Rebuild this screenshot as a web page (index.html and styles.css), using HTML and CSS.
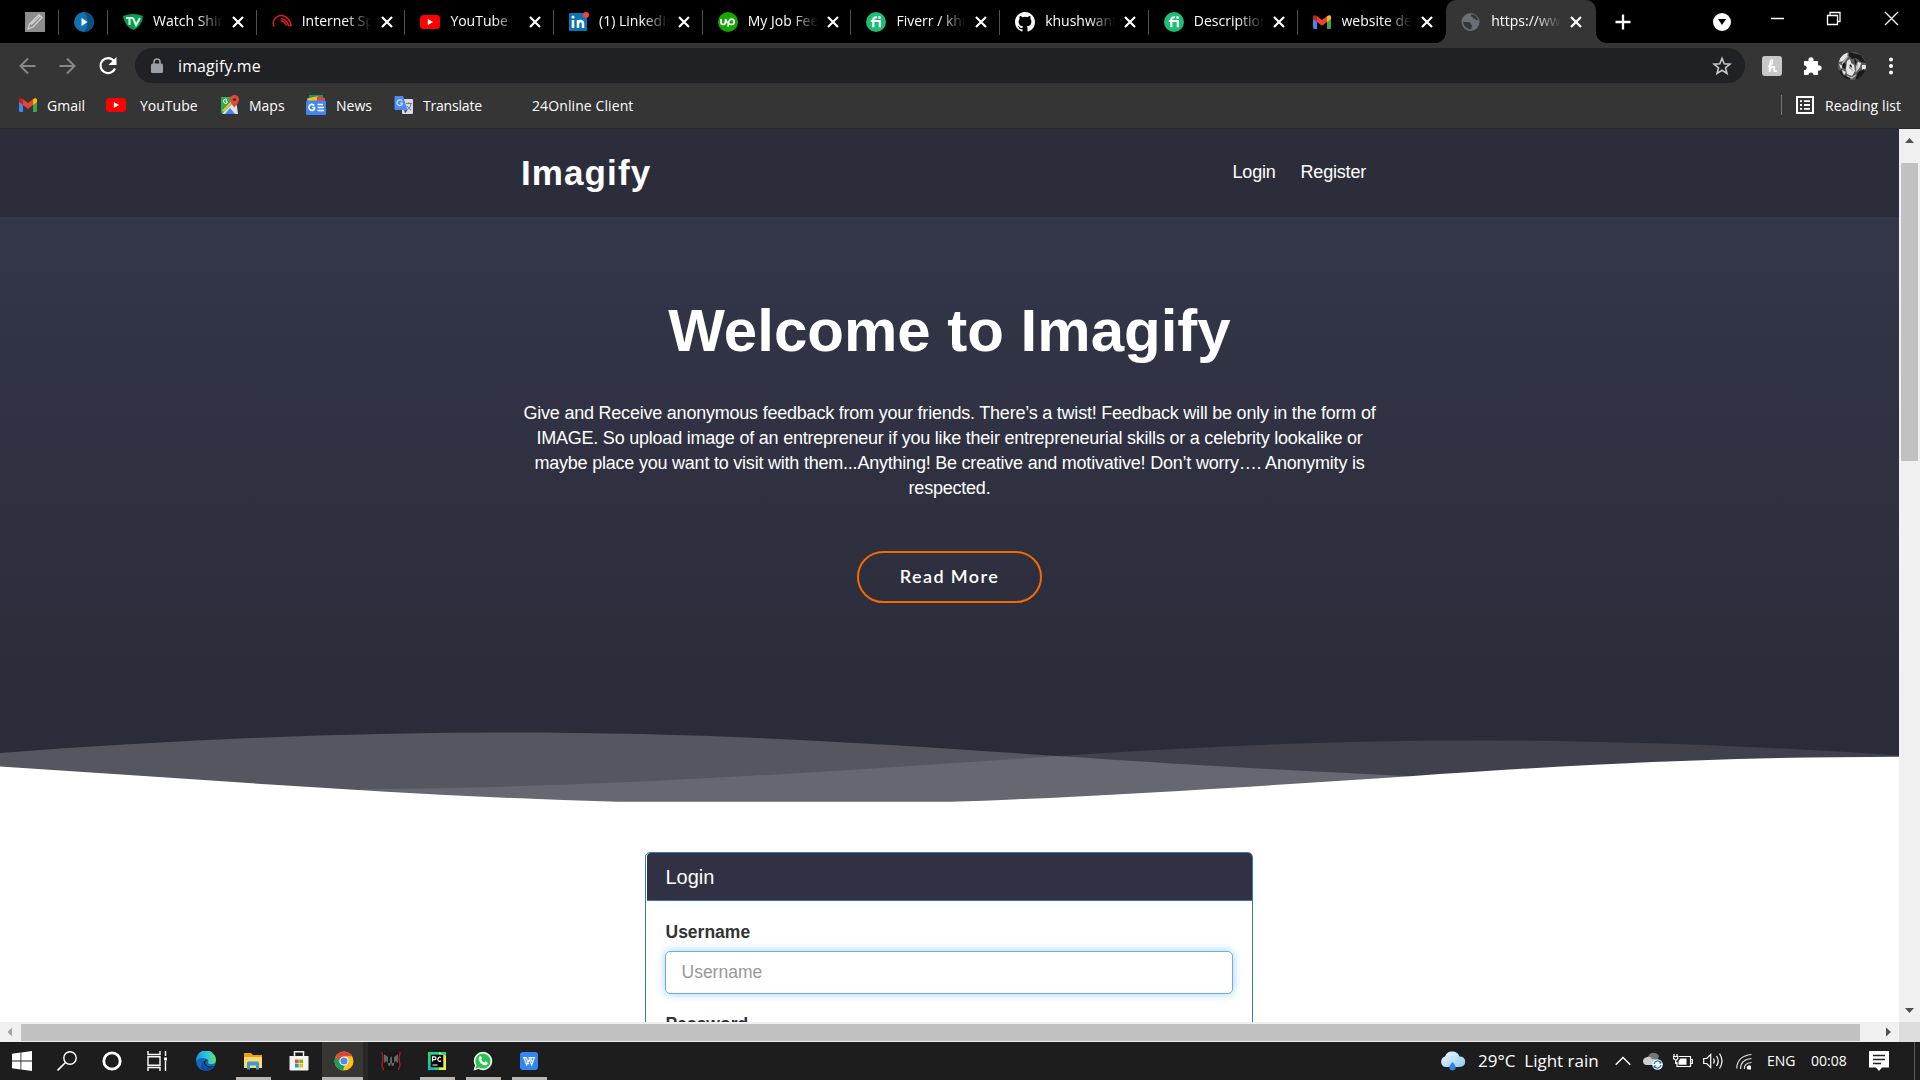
FILE: index.html
```html
<!DOCTYPE html>
<html lang="en">
<head>
<meta charset="utf-8">
<title>Imagify</title>
<link rel="stylesheet" href="styles.css">
</head>
<body>
<svg class="defs" aria-hidden="true">
  <symbol id="x" viewBox="0 0 12 12"><path d="M1 1l10 10M11 1L1 11" stroke="#fff" stroke-width="2.200" fill="none"/></symbol>
  <symbol id="yt" viewBox="0 0 20 14"><rect width="20" height="14" rx="3.5" fill="#f00"/><path d="M7.8 4v6l5.3-3z" fill="#fff"/></symbol>
  <symbol id="gm" viewBox="0 0 18 14"><path d="M0 2v10.500q0 1.500 1.500 1.500H4V5z" fill="#4285f4"/><path d="M18 2v10.500q0 1.500-1.500 1.500H14V5z" fill="#34a853"/><path d="M4 1.200L9 5l5-3.800V7l-5 3.800L4 7z" fill="#ea4335"/><path d="M0 2C0 0 2-.5 4 1.200V7L0 4z" fill="#c5221f"/><path d="M18 2c0-2-2-2.500-4-.8V7l4-3z" fill="#fbbc04"/></symbol>
  <symbol id="fi" viewBox="0 0 20 20"><circle cx="10" cy="10" r="10" fill="#1dbf73"/><path d="M4.800 9h9v6.200M7.300 15.200V8q0-3 3.700-2.700" fill="none" stroke="#fff" stroke-width="2.200"/><circle cx="13.600" cy="5.700" r="1.400" fill="#fff"/></symbol>
</svg>

<header class="tabs">
  <div class="tab pinned first"><svg width="20" height="20" viewBox="0 0 20 20"><rect width="20" height="20" fill="#8d8d8d"/><path d="M3 17l1.500-5L14 2.500l3 3L8 15zM6 12.500L15 4" fill="none" stroke="#d4d4d4" stroke-width="1.200"/></svg></div>
  <div class="tab pinned"><svg width="20" height="20" viewBox="0 0 20 20"><circle cx="10" cy="10" r="10" fill="#1272b4"/><path d="M10 0a10 10 0 0 1 0 20A16 16 0 0 0 10 0" fill="#095284"/><path d="M7.500 6v8l6-4z" fill="#fff"/></svg></div>
  <div class="tab"><svg width="20" height="20" viewBox="0 0 20 20"><path d="M0 4Q10 0 20 4 19 14 10.500 18 2 15 0 4z" fill="#0a9d4e"/><path d="M3 6h7M6.500 6v7M10 6l3 7 4-7" fill="none" stroke="#d8ffe6" stroke-width="2"/></svg><span class="title">Watch Shinchan</span><svg class="x"><use href="#x"/></svg></div>
  <div class="tab"><svg width="20" height="20" viewBox="0 0 20 20"><g fill="none" stroke="#e11b22" stroke-width="1.500"><path d="M2.200 14.500Q0 11 2.500 7.300 6 3 11 3.700 17.500 5 19.200 13.500H16"/><path d="M8.500 6.500Q14 7 16.500 13.500M8.500 8.800q4 .5 6 4.700"/></g></svg><span class="title">Internet Speed</span><svg class="x"><use href="#x"/></svg></div>
  <div class="tab"><svg width="20" height="14"><use href="#yt"/></svg><span class="title">YouTube</span><svg class="x"><use href="#x"/></svg></div>
  <div class="tab"><svg width="20" height="20" viewBox="0 0 20 20"><rect y="1" width="18" height="18" rx="1" fill="#0a77b5"/><path d="M4 8v8M9 16V8M9 12q0-3 2.500-3t2.500 3v4" stroke="#fff" stroke-width="2.500" fill="none"/><circle cx="4" cy="5" r="1.500" fill="#fff"/><circle cx="17" cy="3" r="3" fill="#f0433a"/></svg><span class="title">(1) LinkedIn</span><svg class="x"><use href="#x"/></svg></div>
  <div class="tab"><svg width="20" height="20" viewBox="0 0 20 20"><circle cx="10" cy="10" r="10" fill="#14a800"/><path d="M3 7v3q0 2.500 2.200 2.500T7.500 10V7q2 5.500 6 5.500a2.700 2.700 0 1 0 0-5.400q-3 0-3.500 7.500" fill="none" stroke="#fff" stroke-width="1.700"/></svg><span class="title">My Job Feed</span><svg class="x"><use href="#x"/></svg></div>
  <div class="tab"><svg width="20" height="20"><use href="#fi"/></svg><span class="title">Fiverr / khush</span><svg class="x"><use href="#x"/></svg></div>
  <div class="tab"><svg width="20" height="20" viewBox="0 0 16 16"><path fill="#fff" d="M8 0C3.580 0 0 3.580 0 8c0 3.540 2.290 6.530 5.470 7.590.4.070.55-.17.55-.38 0-.19-.01-.82-.01-1.490-2.010.37-2.530-.49-2.690-.94-.09-.23-.48-.94-.82-1.130-.28-.15-.68-.52-.01-.53.63-.01 1.080.58 1.230.82.72 1.210 1.870.87 2.330.66.07-.52.28-.87.51-1.070-1.780-.2-3.640-.89-3.640-3.950 0-.87.31-1.590.82-2.150-.08-.2-.36-1.020.08-2.120 0 0 .67-.21 2.200.82a7.600 7.600 0 0 1 4 0c1.530-1.040 2.200-.82 2.200-.82.44 1.100.16 1.920.08 2.120.51.56.82 1.270.82 2.150 0 3.070-1.870 3.750-3.650 3.950.29.25.54.73.54 1.480 0 1.070-.01 1.930-.01 2.200 0 .21.15.46.55.38A8 8 0 0 0 16 8c0-4.420-3.580-8-8-8z"/></svg><span class="title">khushwant</span><svg class="x"><use href="#x"/></svg></div>
  <div class="tab"><svg width="20" height="20"><use href="#fi"/></svg><span class="title">Description</span><svg class="x"><use href="#x"/></svg></div>
  <div class="tab last"><svg class="gm" width="18" height="14"><use href="#gm"/></svg><span class="title">website dev</span><svg class="x"><use href="#x"/></svg></div>
  <div class="tab active"><svg width="20" height="20" viewBox="0 0 20 20"><circle cx="9.500" cy="10" r="9" fill="#6b6f75"/><path d="M10 2.500Q16 2 17 8q-3 1-3.500-1.500-2 .5-2-1.500-2 0-1.500-2.500zM2 10h5q3 0 2.500 2.500 3 0 1 2.500v2.500Q3 17 2 10z" fill="#353535"/></svg><span class="title">https://www</span><svg class="x"><use href="#x"/></svg></div>
  <svg class="plus" width="16" height="16" viewBox="0 0 16 16"><path d="M8 .5v15M.5 8h15" stroke="#fff" stroke-width="2.300"/></svg>
  <svg class="wc" width="204" height="36" viewBox="0 0 204 36"><circle cx="9" cy="22" r="9" fill="#fff"/><path d="M5 19h8l-4 6z" fill="#000"/><g fill="none" stroke="#fff" stroke-width="1.300"><path d="M58 18.500h13M114.500 15.500h10v9h-10zM117 15.500v-3h10v9h-2.500M172 12l13 13M185 12l-13 13"/></g></svg>
</header>

<nav class="toolbar">
  <div class="row">
    <svg class="arrows" width="100" height="24" viewBox="0 0 100 24"><g fill="none" stroke="#85878a" stroke-width="2"><path d="M17.500 12H2.500M10 4.500L2.500 12l7.500 7.500M41.500 12h15M49 4.500l7.500 7.500-7.500 7.500"/></g><path d="M96 7A7.500 7.500 0 1 0 97 14.500" fill="none" stroke="#fff" stroke-width="2.200"/><path d="M98.500 3v8h-8z" fill="#fff"/></svg>
    <div class="address">
      <svg width="12" height="15" viewBox="0 0 12 15"><path d="M3 7V4a3 3 0 0 1 6 0v3" fill="none" stroke="#9aa0a6" stroke-width="1.600"/><rect y="5.500" width="12" height="9.500" rx="1.500" fill="#9aa0a6"/></svg>
      <span class="url">imagify.me</span>
      <svg class="star" width="20" height="20" viewBox="0 0 20 20"><path d="M10 2.300l2.200 5.400 5.800.4-4.500 3.700 1.500 5.700-5-3.200-5 3.200 1.500-5.700L2 8.100l5.800-.4z" fill="none" stroke="#c4c7cb" stroke-width="1.600"/></svg>
    </div>
    <svg class="ext" width="22" height="22" viewBox="0 0 22 22"><rect x="1" y="1" width="20" height="20" rx="3" fill="#c8c8c8"/><path d="M7 12q5-3 4.500-6.500Q9.500 4 9 9l-.5 8q1-5 3.500-5.500 2 0 1 3-.5 3 3 1" fill="none" stroke="#fff" stroke-width="1.600"/></svg>
    <svg class="puzzle" width="20" height="20" viewBox="0 0 20 20"><path d="M2 5h4.500a2.700 2.700 0 1 1 5 0H16v4.500a2.700 2.700 0 1 1 0 5V19h-4.500a2.300 2.300 0 1 0-5 0H2v-5a2.300 2.300 0 1 0 0-4.500z" fill="#fff"/></svg>
    <svg class="avatar" width="28" height="28" viewBox="0 0 28 28"><clipPath id="face"><circle cx="14" cy="14" r="14"/></clipPath><g clip-path="url(#face)"><path fill="#5c5c5c" d="M0 0h28v28H0z"/><path fill="#e6e6e6" d="M3 3l7-3-1 5-4 4-4 1zM9 9l3-2 1 4 3 2 1 6-3 5-5-2-1-5zM20 10l3 1-1 4-3 4-1-4zM24 13h4v4l-4 1zM1 12l4 2-2 3zM4 18l4 2-2 3z"/><path fill="#1b1b1b" d="M11 0l12 3 5 8-5-1-5-4-4 1-3-3zM5 10l3 2-1 5-3-2zM0 19l3-1 2 5 7 2v4H4zM12 12l2 2-1 3-2-1zM20 20l6-3 2 3-6 8h-5zM16 5l3 5-2 3z"/><path d="M4 12l6-8M11 14l4 5M20 12l-2 8M9 24l5 2 4-3" stroke="#b4b4b4" stroke-width="1.300" fill="none"/></g></svg>
    <svg class="dots" width="6" height="22" viewBox="0 0 6 22"><g fill="#fff"><circle cx="3" cy="4.500" r="2"/><circle cx="3" cy="11" r="2"/><circle cx="3" cy="17.500" r="2"/></g></svg>
  </div>
  <div class="bookmarks">
    <a class="b-gmail"><svg width="18" height="14"><use href="#gm"/></svg>Gmail</a>
    <a class="b-yt"><svg width="20" height="14"><use href="#yt"/></svg>YouTube</a>
    <a class="b-maps"><svg width="18" height="20" viewBox="0 0 18 20"><path d="M0 2h16v16H0z" fill="#34a853"/><path d="M1 19L15 5l2 14z" fill="#dfe3e8"/><path d="M4 19l5-6 5 6z" fill="#4285f4"/><path d="M2 16L13 5" stroke="#fbc116" stroke-width="2"/><path d="M9 4.500a4.500 4.500 0 0 1 9 0q0 3-4.500 8Q9 8 9 4.500z" fill="#dd4b3e"/><circle cx="13.500" cy="4.500" r="1.600" fill="#801b13"/><path d="M6 4.500a2.200 2.200 0 1 0 0 3.500V6H4.500" stroke="#fff" fill="none"/></svg>Maps</a>
    <a class="b-news"><svg width="20" height="20" viewBox="0 0 20 20"><path d="M3 0h14v5H3z" fill="#0c9d58"/><path d="M1 3.500l11-2.500 2 7H2z" fill="#f7b928"/><path d="M11 1.500l8 1.500v4h-8z" fill="#ea4335"/><rect y="5.500" width="20" height="14.500" rx="1.500" fill="#4285f4"/><path d="M8.200 10.500a3 3 0 1 0 .2 3.500v-1.500H6M11.500 9.500H17M11.500 12.500H18M11.500 15.500H18" fill="none" stroke="#fff" stroke-width="1.600"/></svg>News</a>
    <a class="b-tr"><svg width="20" height="20" viewBox="0 0 20 20"><rect x="8" y="4" width="11" height="15" rx="1" fill="#dadce0"/><path d="M12 8.500h6M15 7v2M17 9q-1 5-4 6M13 11q2 3 4 4" stroke="#727a83" fill="none"/><path d="M1 1h8l4.500 14H2q-1.500 0-1.500-1.500V2z" fill="#4c8bf5"/><path d="M10 15h3.500L11 18.500z" fill="#2456b8"/><path d="M8 6a2.800 2.800 0 1 0 .3 3V8H6" stroke="#d8e5ff" stroke-width="1.200" fill="none"/></svg><span>Translate</span></a>
    <a class="b-24">24Online Client</a>
    <a class="reading"><svg width="18" height="18" viewBox="0 0 18 18"><rect x="1" y="1" width="16" height="16" fill="none" stroke="#fff" stroke-width="2"/><path d="M4 5.200h2M8 5.200h6M4 9h2M8 9h6M4 12.800h2M8 12.800h6" stroke="#fff" stroke-width="1.800"/></svg>Reading list</a>
  </div>
</nav>

<div class="viewport">
  <main class="page">
    <div class="sitebar"><div class="brand">Imagify</div><div class="links"><a>Login</a><a>Register</a></div></div>
    <section class="hero">
      <h1>Welcome to Imagify</h1>
      <p><span>Give and Receive anonymous feedback from your friends. There’s a twist! Feedback will be only in the form of</span><br><span>IMAGE. So upload image of an entrepreneur if you like their entrepreneurial skills or a celebrity lookalike or</span><br><span>maybe place you want to visit with them...Anything! Be creative and motivative! Don’t worry…. Anonymity is</span><br><span>respected.</span></p>
      <a class="more">Read More</a>
      <svg class="waves" width="1899" height="72" viewBox="0 730 1899 72">
        <path fill="#fff" fill-opacity=".2" d="M0 753C170 740 340 732.500 508 732.500 720 732.500 880 744 1058 756 1180 764.500 1300 771 1410 776.300V802H0z"/>
        <path fill="#fff" fill-opacity=".1" d="M360 789C600 788 820 772 1058 756 1200 746 1340 740.500 1474 740.500 1620 740.500 1760 746 1899 755.500V802H360z"/>
        <path fill="#fff" d="M0 766.500C210 780 410 796 618 801.800H950C1120 796 1270 785 1410 776.300 1580 764 1730 757 1899 756.700V802H0z"/>
      </svg>
    </section>
    <section class="card">
      <div class="card-head">Login</div>
      <div class="card-body">
        <label>Username</label><div class="field">Username</div>
        <label>Password</label><div class="field plain">Password</div>
      </div>
    </section>
  </main>
  <div class="vbar"><svg width="21" height="34" viewBox="0 0 21 34"><path d="M6 14h9l-4.500-5z" fill="#505050"/></svg><div class="vthumb"></div><svg class="down" width="21" height="24" viewBox="0 0 21 24"><path d="M6 10h9l-4.500 5z" fill="#505050"/></svg></div>
  <div class="hbar"><svg width="21" height="20" viewBox="0 0 21 20"><path d="M12 5.500v9L7.500 10z" fill="#a3a3a3"/></svg><div class="hthumb"></div><svg class="right" width="39" height="20" viewBox="0 0 39 20"><path d="M26 5.500v9l5-4.500z" fill="#505050"/></svg></div>
  <div class="corner"></div>
</div>

<footer class="taskbar">
  <div class="app w1"><svg width="20" height="20" viewBox="0 0 20 20"><path d="M0 2.800L8.500 1.600v8H0zM9.300 1.500L20 0v9.600H9.300zM0 10.400h8.500v8L0 17.200zM9.300 10.400H20V20l-10.700-1.500z" fill="#fff"/></svg></div>
  <div class="app w1"><svg width="20" height="20" viewBox="0 0 20 20"><circle cx="13" cy="7" r="6.200" fill="none" stroke="#fff" stroke-width="1.400"/><path d="M8.500 11.500L.5 19.500" stroke="#fff" stroke-width="1.600"/></svg></div>
  <div class="app w1"><svg width="20" height="20" viewBox="0 0 20 20"><circle cx="10" cy="10" r="8.200" fill="none" stroke="#fff" stroke-width="2.800"/></svg></div>
  <div class="app w1"><svg width="20" height="20" viewBox="0 0 20 20"><path d="M1 0v3.500h12V0M1 20v-3.500h12V20M1 5.700h12v8.600H1zM18.500 0v5M18.500 10v10" fill="none" stroke="#fff" stroke-width="1.400"/><path d="M17 6.500h3v3h-3z" fill="#fff"/></svg></div>
  <div class="app edge"><svg width="20" height="20" viewBox="0 0 20 20"><defs><linearGradient id="eg"><stop stop-color="#1a91da"/><stop offset=".55" stop-color="#2cc5df"/><stop offset="1" stop-color="#69de65"/></linearGradient></defs><circle cx="10" cy="10" r="10" fill="#1268bd"/><path d="M0 10A10 10 0 0 1 20 8.500Q20 13 15.500 13.200 11.500 13.200 12 11.500 13.500 8.500 10 7.500 3 6 0 10z" fill="url(#eg)"/><path d="M8.500 9.500Q5 16 13 17q3.500 0 5.700-1.500Q15 20 10 20 3 18 6 11.500q1-2 3-2z" fill="#0c4da0"/><path d="M11.500 9.500q-3 0-2 3.500 2.500 4 9.500 1.800-4.500 3.200-8.500 1Q6 12 9 9.500q1.500-1 2.500 0z" fill="#1d2026"/></svg></div>
  <div class="app open"><svg width="20" height="20" viewBox="0 0 20 20"><path d="M1 2h7l2 2h9v13H1z" fill="#e8a317"/><path d="M1 6h18v11H1z" fill="#ffd96a"/><path d="M4 18.500V12q0-1.500 1.500-1.500h9Q16 10.500 16 12v6.500h-3v-4H7v4z" fill="#3b97dc"/></svg></div>
  <div class="app"><svg width="20" height="20" viewBox="0 0 20 20"><path d="M.5 5h19v13.500q0 1-1 1h-17q-1 0-1-1z" fill="#f3f3f3"/><path d="M5.500 5V.8h9V5" fill="none" stroke="#ededed" stroke-width="1.500"/><path d="M6 8.500h3.700v3.700H6z" fill="#f25022"/><path d="M10.300 8.500H14v3.700h-3.700z" fill="#7fba00"/><path d="M6 12.800h3.700v3.700H6z" fill="#00a4ef"/><path d="M10.300 12.800H14v3.700h-3.700z" fill="#ffb900"/></svg></div>
  <div class="app chrome"><svg width="20" height="20" viewBox="0 0 20 20"><circle cx="10" cy="10" r="9.500" fill="#fbc116"/><path d="M1.800 5.200A9.500 9.500 0 0 1 18.200 5.200H10z" fill="#dc4437"/><path d="M1.800 5.200L6 12l5-7z" fill="#dc4437"/><path d="M1.800 5.200L6 12.500l4.500 2L9 19.450A9.500 9.500 0 0 1 1.800 5.200z" fill="#16a05d"/><circle cx="10" cy="10" r="4.600" fill="#fff"/><circle cx="10" cy="10" r="3.600" fill="#4c8bf5"/></svg></div>
  <div class="app"><svg width="20" height="20" viewBox="0 0 20 20"><path d="M2 1h16l-1 18H3z" fill="#171717"/><path d="M.8 1q2 8 0 13l2 5M19.200 1q-2 8 0 13l-2 5" fill="none" stroke="#b61d20" stroke-width="1.200"/><path d="M3 3l4 3v6h2V5l1 2 1-2v7h2V6l4-3v9l-3-2-1.500 5H11l-1-3-1 3H7.500L6 10l-3 2z" fill="#656565"/></svg></div>
  <div class="app open"><svg width="20" height="20" viewBox="0 0 20 20"><path d="M1 1h18v18H1z" fill="#21d789"/><path d="M12 1l7 4v14h-7z" fill="#e9ee4c"/><path d="M1 11v8h8z" fill="#07c3c6"/><path d="M3.700 3.700h12.600v12.600H3.700z" fill="#050505"/><path d="M5.500 10.500V5.800h2q1.500 0 1.500 1.400T7.500 8.700h-2M14 6.600a2 2 0 1 0 0 3.200M5.500 14h5" fill="none" stroke="#fff" stroke-width="1.200"/></svg></div>
  <div class="app open"><svg width="20" height="20" viewBox="0 0 20 20"><path d="M.5 19.500L2 14.500A9.200 9.200 0 1 1 5.500 18z" fill="#f4f4f4"/><path d="M2.500 17.500l1-3.500A7.500 7.500 0 1 1 6 16.500z" fill="#2ac54f"/><path d="M6.500 5.500q1.200-1 1.800.3l.7 1.500-.9 1.200q1 2 3.200 3l1.200-1.200 2.200 1.100q0 3-3 2.800Q7 13 5.700 8.500q-.2-1.900.8-3z" fill="#fff"/></svg></div>
  <div class="app open"><svg width="20" height="20" viewBox="0 0 20 20"><rect x="1" y="1" width="18" height="18" rx="3" fill="#3186f4"/><path d="M4 6.700h3.300l2.400 6.500M5 6.700L7.700 14l2.600-5.500L12.600 14l2.900-7.300H9.500M11.500 6.700l1.600 4" fill="none" stroke="#fff" stroke-width="1.200"/></svg></div>

  <div class="tray">
    <svg class="cloud" width="27" height="20" viewBox="0 0 27 20"><defs><linearGradient id="cg" x2="1" y2="1"><stop stop-color="#f3faff"/><stop offset="1" stop-color="#8ccaf2"/></linearGradient></defs><path d="M6 16a5.500 5.500 0 0 1 0-10.500Q8 0 14 .5q5 .5 6.500 5 5.500 0 5.700 5T20 16z" fill="url(#cg)"/><path d="M13.500 11q3.500 4 3.200 5.800-.5 2.700-3.200 2.700t-3.200-2.700Q10 15 13.500 11z" fill="#2f86e4"/></svg>
    <span class="weather">29°C&nbsp; Light rain</span>
    <svg class="chev" width="16" height="10" viewBox="0 0 16 10"><path d="M.7 8.800L8 1.500l7.300 7.300" fill="none" stroke="#fff" stroke-width="1.400"/></svg>
    <svg class="drive" width="20" height="18" viewBox="0 0 20 18"><path d="M5 5q2-5 7-4 4 1 4 4l-5 6-8-1z" fill="#777"/><path d="M3 13Q0 12 0 9t4-4q3-1 5 2l6 1v5z" fill="#cfcfcf"/><circle cx="14.500" cy="12.500" r="5.300" fill="#fff"/><path d="M11 12a3.600 3.600 0 0 1 6.500-1.500M18 13a3.600 3.600 0 0 1-6.500 1.500" fill="none" stroke="#1673c5" stroke-width="1.300"/><path d="M18.500 8.500v3h-3zM10.500 16.500v-3h3z" fill="#1673c5"/></svg>
    <svg class="bat" width="20" height="16" viewBox="0 0 20 16"><path d="M6 3.500h11.500v10H4V9M17.500 6.500h1.800v4h-1.800M1 1v2M4 1v2M.5 3.500h4.300v2L3.500 7h-1L.5 5.500zM2.700 7v3.500H4" fill="none" stroke="#fff" stroke-width="1.200"/><path d="M7.500 5.500h6v6.200h-8V8z" fill="#fff"/></svg>
    <svg class="vol" width="21" height="18" viewBox="0 0 21 18"><path d="M.7 6.500h3l4-4v13l-4-4h-3zM10.500 6.500q1.500 2.500 0 5M13.500 4q3.500 5 0 10M16.500 1.500q5 7.500 0 15" fill="none" stroke="#fff" stroke-width="1.200"/></svg>
    <svg class="wifi" width="17" height="17" viewBox="0 0 17 17"><g fill="none" stroke="#ddd" stroke-width="1.200"><path d="M.8 15.500Q1 3 15.500 1.500M4.500 16Q4.500 6.500 15.500 5.500M8.300 16Q8 10 15.500 9.500"/></g><path d="M11.500 16.500a1.800 1.800 0 0 1 3.500-3.500v3.500z" fill="#fff"/></svg>
    <span class="lang">ENG</span>
    <span class="clock">00:08</span>
    <svg class="note" width="20" height="20" viewBox="0 0 20 20"><path d="M0 0h20v16.500h-7L10 20l-3-3.500H0z" fill="#fff"/><path d="M4 4.500h12M4 8.500h12M4 12.500h8" stroke="#222" stroke-width="1.300"/></svg>
    <i class="peek"></i>
  </div>
</footer>
</body>
</html>
```
FILE: styles.css
```css
* { box-sizing: border-box; }
body { margin: 0; width: 1920px; height: 1080px; overflow: hidden; display: flex; flex-direction: column; font-family: "Open Sans", "Noto Sans", sans-serif; font-size: 14px; color: #fff; background: #000; }
svg { flex: none; display: block; }
.defs { width: 0; height: 0; position: absolute; }

.tabs { height: 43px; display: flex; background: #000; flex: none; }
.tab { width: 148.7px; height: 43px; padding: 0 13px 0 15px; display: flex; align-items: center; flex: none; background: linear-gradient(#505050, #505050) no-repeat right 10px / 1px 25px; }
.tab .gm { margin-right: 1px; }
.tab.pinned { width: 49px; }
.tab.first { width: 59px; padding-left: 25px; }
.tab.last { background: none; }
.tab.active { background: #353535; border-radius: 10px 10px 0 0; position: relative; width: 150px; }
.tab.active::before, .tab.active::after { content: ""; position: absolute; bottom: 0; width: 10px; height: 10px; }
.tab.active::before { left: -10px; background: radial-gradient(circle at 0 0, transparent 9.5px, #353535 10px); }
.tab.active::after { right: -10px; background: radial-gradient(circle at 100% 0, transparent 9.5px, #353535 10px); }
.title { width: 70px; margin: 0 9px 0 10px; overflow: hidden; white-space: nowrap; line-height: 22px; height: 24px; -webkit-mask-image: linear-gradient(90deg, #000 62%, transparent 100%); mask-image: linear-gradient(90deg, #000 62%, transparent 100%); flex: none; }
.x { width: 12px; height: 12px; }
.plus { margin: 14px 0 0 19px; }
.wc { margin-left: auto; margin-right: 3px; }

.toolbar { height: 86px; background: #353535; border-bottom: 1px solid #28282c; flex: none; }
.row { height: 45px; display: flex; align-items: center; padding: 0 25px 0 18px; }
.arrows { margin-right: 17px; }
.address { width: 1610px; height: 35px; border-radius: 18px; background: #202124; display: flex; align-items: center; padding: 0 13px 0 16px; }
.url { margin-left: 15px; font-size: 16px; line-height: 24px; letter-spacing: .1px; }
.star { margin-left: auto; }
.ext { margin-left: 16px; }
.puzzle { margin-left: 19px; }
.avatar { margin-left: 16px; }
.dots { margin-left: 22px; }
.bookmarks { display: flex; height: 34px; align-items: center; padding-left: 19px; }
.bookmarks a { display: flex; align-items: center; flex: none; white-space: nowrap; }
.b-gmail { gap: 10px; width: 87px; }
.b-yt { gap: 14px; width: 115px; }
.b-maps { gap: 10px; width: 85px; }
.b-news { gap: 10px; width: 88px; }
.b-tr { gap: 9px; width: 138px; letter-spacing: -.2px; }
.b-24 { letter-spacing: .1px; }
.reading { gap: 11px; margin-left: auto; border-left: 1px solid #777; padding-left: 14px; height: 20px; width: 139px; letter-spacing: .1px; }

.viewport { height: 913px; display: grid; grid-template: 893px 20px / 1899px 21px; flex: none; }
.page { background: #fff; overflow: hidden; font-family: "Liberation Sans", Arial, sans-serif; display: flex; flex-direction: column; align-items: center; }
.sitebar { width: 100%; height: 88px; background: #2c2d3a; display: flex; justify-content: space-between; align-items: center; padding: 0 533px 0 521px; flex: none; }
.brand { font-size: 35px; font-weight: 700; letter-spacing: 1.1px; }
.links { display: flex; gap: 25px; font-size: 18px; letter-spacing: -.2px; padding-bottom: 2px; }
.hero { width: 100%; height: 585px; background: linear-gradient(#333649, #2b2c39 90%); display: flex; flex-direction: column; align-items: center; flex: none; }
h1 { margin: 78px 0 0; font-size: 60px; line-height: 72px; }
.hero p { margin: 34px 0 0; font-size: 18px; line-height: 25px; text-align: center; letter-spacing: -.22px; white-space: nowrap; }
.more { margin-top: 50px; width: 185px; height: 52px; border: 2px solid #f56a00; border-radius: 26px; font: 600 18px/47px Lato, sans-serif; letter-spacing: 1.4px; text-align: center; }
.waves { margin-top: auto; }
.card { margin: 50px 2px 0 0; width: 608px; height: 500px; border: 1px solid #337ab7; border-radius: 5px; flex: none; color: #333; }
.card-head { height: 48px; margin-left: 1px; background: #303244; border-bottom: 1px solid #337ab7; border-radius: 4px 4px 0 0; padding-left: 19px; font-size: 20px; line-height: 48px; color: #fff; }
.card-body { padding: 19px 19px; font-size: 17.5px; }
.card-body label { display: block; font-weight: 700; line-height: 25px; margin: 0 0 6px 1px; }
.field { height: 43px; border: 1px solid #66afe9; border-radius: 5px; padding-left: 16px; line-height: 41px; color: #999; box-shadow: 0 0 10px rgba(102, 175, 233, .6); margin-bottom: 18px; }
.field.plain { border-color: #ccc; box-shadow: none; }

.vbar { background: #f0f0f0; display: flex; flex-direction: column; }
.vthumb { height: 298px; margin: 0 2px; background: #c1c1c1; }
.down { margin-top: auto; }
.hbar { background: #f0f0f0; display: flex; }
.hthumb { height: 17px; margin-top: 2px; flex: 1; background: #c1c1c1; }
.corner { background: #dcdcdc; }

.taskbar { height: 38px; background: #1d1d1d; display: flex; flex: none; padding-left: 0; }
.app { width: 46px; height: 38px; display: flex; justify-content: center; align-items: center; flex: none; }
.app.w1 { width: 45px; padding-right: 1px; }
.app.edge { width: 50px; padding-left: 2px; }
.app.open { background: linear-gradient(#b9b6b3, #b9b6b3) no-repeat center bottom / 35px 3px; }
.app.chrome { background: linear-gradient(#b9b6b3, #b9b6b3) no-repeat left bottom / 100% 3px, #383633; border-right: 5px solid #292725; padding-left: 3px; }
.tray { margin-left: auto; width: 481px; display: flex; align-items: center; height: 38px; }
.tray span { line-height: 24px; white-space: nowrap; flex: none; }
.weather { font-size: 17px; width: 137px; margin-left: 12px; }
.drive { margin-left: 12px; }
.bat { margin-left: 10px; }
.vol { margin-left: 10px; }
.wifi { margin-left: 12px; }
.lang { margin-left: 14px; width: 44px; }
.clock { width: 58px; }
.peek { width: 1px; height: 38px; background: #5a5a5a; margin-left: 25px; }
```
